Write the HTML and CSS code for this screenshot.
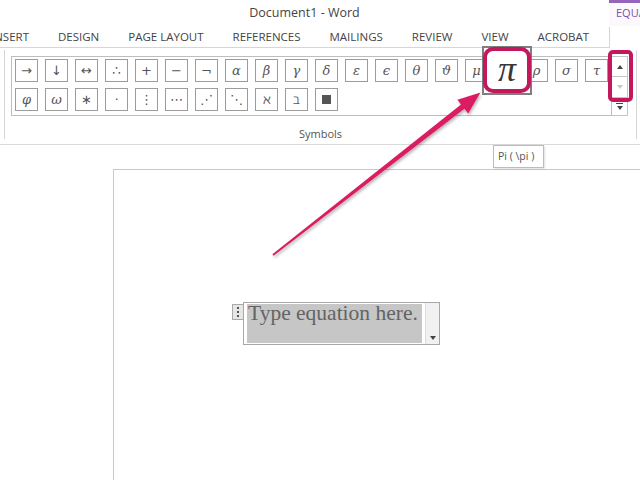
FILE: index.html
```html
<!DOCTYPE html>
<html lang="en">
<head>
<meta charset="utf-8">
<title>Document1 - Word</title>
<link rel="stylesheet" href="styles.css">
</head>
<body>
<div class="window">
  <header class="titlebar">
    <div class="title">Document1 - Word</div>
    <div class="ctx-head">EQUA</div>
  </header>
  <nav class="tabs">
    <ul class="tab-list">
      <li class="tab tab-first">INSERT</li>
      <li class="tab">DESIGN</li>
      <li class="tab">PAGE LAYOUT</li>
      <li class="tab">REFERENCES</li>
      <li class="tab">MAILINGS</li>
      <li class="tab">REVIEW</li>
      <li class="tab">VIEW</li>
      <li class="tab">ACROBAT</li>
    </ul>
    <div class="tab-active"></div>
  </nav>
  <section class="ribbon">
    <div class="group">
      <div class="gallery-row">
        <div class="gallery">
          <span class="sym">→</span>
          <span class="sym">↓</span>
          <span class="sym">↔</span>
          <span class="sym">∴</span>
          <span class="sym">+</span>
          <span class="sym">−</span>
          <span class="sym">¬</span>
          <span class="sym greek">α</span>
          <span class="sym greek">β</span>
          <span class="sym greek">γ</span>
          <span class="sym greek">δ</span>
          <span class="sym greek">ε</span>
          <span class="sym greek">ϵ</span>
          <span class="sym greek">θ</span>
          <span class="sym greek">ϑ</span>
          <span class="sym greek">μ</span>
          <span class="sym greek hovered">π</span>
          <span class="sym greek">ρ</span>
          <span class="sym greek">σ</span>
          <span class="sym greek">τ</span>
          <span class="sym greek">φ</span>
          <span class="sym greek">ω</span>
          <span class="sym">∗</span>
          <span class="sym">⋅</span>
          <span class="sym">⋮</span>
          <span class="sym">⋯</span>
          <span class="sym">⋰</span>
          <span class="sym">⋱</span>
          <span class="sym heb">ℵ</span>
          <span class="sym heb">ℶ</span>
          <span class="sym"><i class="square"></i></span>
        </div>
        <div class="scroll">
          <div class="scroll-btn scroll-up"><i class="tri-up"></i></div>
          <div class="scroll-btn scroll-down"><i class="tri-down light"></i></div>
          <div class="scroll-btn scroll-more"><i class="more-line"></i><i class="tri-down"></i></div>
        </div>
      </div>
      <div class="group-label">Symbols</div>
    </div>
  </section>
  <main class="workspace">
    <div class="page">
      <div class="eq-row">
        <div class="eq-handle"><i></i><i></i><i></i></div>
        <div class="eq-box">
          <span class="eq-text">Type equation here.</span>
          <span class="eq-drop"><i class="tri-down"></i></span>
        </div>
      </div>
    </div>
  </main>

  <div class="mark mark-pi"></div>
  <div class="mark mark-scroll"></div>
  <div class="tooltip">Pi ( \pi )</div>

  <svg class="arrow" width="640" height="480" viewBox="0 0 640 480">
    <defs>
      <filter id="sh" x="-10%" y="-10%" width="120%" height="120%">
        <feDropShadow dx="1" dy="2" stdDeviation="1.5" flood-color="#000" flood-opacity="0.3"/>
      </filter>
    </defs>
    <polygon filter="url(#sh)" fill="#dc1f62"
      points="272.4,254.2 461.0,104.4 457.4,99.8 480.5,92.5 468.2,113.4 464.4,108.8 273.6,255.8"/>
  </svg>
</div>
</body>
</html>
```
FILE: styles.css
```css
* { box-sizing: border-box; }
html, body { margin: 0; padding: 0; }
body {
  background: #ffffff;
  font-family: "Open Sans", "Noto Sans", sans-serif;
  color: #444;
}
.window {
  position: relative;
  width: 640px;
  height: 480px;
  overflow: hidden;
  background: #fff;
}

/* title bar */
.titlebar {
  display: flex;
  height: 26px;
}
.title {
  flex: 1;
  text-align: center;
  font-size: 12.5px;
  line-height: 26px;
  color: #444;
}
.ctx-head {
  width: 31px;
  border-top: 3px solid #9166bb;
  font-size: 11px;
  line-height: 20px;
  color: #7d4fa5;
  padding-left: 7px;
  overflow: hidden;
  white-space: nowrap;
  background: #fbf9fd;
}

/* tabs */
.tabs {
  display: flex;
  height: 22px;
}
.tab-list {
  flex: 1;
  display: flex;
  gap: 29px;
  margin: 0;
  padding: 0;
  list-style: none;
  border-bottom: 1px solid #d6d6d6;
  overflow: hidden;
  white-space: nowrap;
}
.tab {
  font-size: 11.5px;
  line-height: 21px;
  color: #444;
}
.tab-first { margin-left: -9px; }
.tab-active {
  width: 31px;
  border-left: 1px solid #d6d6d6;
  margin-top: 1px;
}

/* ribbon */
.ribbon {
  height: 95px;
  border-bottom: 1px solid #dadada;
}
.group {
  margin-left: 4px;
  margin-top: 2px;
  width: 633px;
  height: 89px;
  border-left: 1px solid #d6d6d6;
  border-right: 1px solid #d6d6d6;
}
.gallery-row {
  display: flex;
  padding-left: 6px;
  padding-top: 6px;
}
.gallery {
  width: 601px;
  height: 60px;
  border: 1px solid #bdbdbd;
  padding: 2px 3px 4px 3px;
  display: grid;
  grid-template-columns: repeat(20, 23px);
  grid-auto-rows: 23px;
  column-gap: 7px;
  row-gap: 6px;
}
.sym {
  display: flex;
  align-items: center;
  justify-content: center;
  border: 1px solid #9c9c9c;
  background: #fff;
  font-family: "DejaVu Sans", sans-serif;
  font-size: 13px;
  color: #555;
  line-height: 1;
}
.sym.greek {
  font-family: "DejaVu Serif", "Liberation Serif", serif;
  font-style: italic;
  font-size: 13px;
}
.sym.heb {
  font-family: "DejaVu Serif", serif;
  font-size: 13px;
}
/* hovered button grows over its neighbours */
.sym.hovered {
  position: relative;
  z-index: 2;
  margin: -13px -14px -13px -13px;
  border: 2px solid #7f7f7f;
  font-family: "Liberation Serif", serif;
  font-size: 36px;
  padding-bottom: 4px;
  color: #383838;
}
.square {
  display: block;
  width: 9px;
  height: 9px;
  background: #555;
}

.scroll {
  width: 16px;
  height: 60px;
  display: flex;
  flex-direction: column;
}
.scroll-btn {
  display: flex;
  flex-direction: column;
  align-items: center;
  justify-content: center;
  border: 1px solid #c4c4c4;
  border-left: none;
  background: #fff;
}
.scroll-up { height: 21px; }
.scroll-down { height: 21px; border-top: none; }
.scroll-more { height: 18px; border-top: none; gap: 2px; }
.tri-up {
  width: 0; height: 0;
  border-left: 3px solid transparent;
  border-right: 3px solid transparent;
  border-bottom: 4px solid #444;
}
.tri-down {
  width: 0; height: 0;
  border-left: 3px solid transparent;
  border-right: 3px solid transparent;
  border-top: 4px solid #444;
}
.tri-down.light { border-top-color: #c8c8c8; }
.more-line {
  width: 7px;
  height: 1px;
  background: #444;
}
.group-label {
  margin-top: 11px;
  text-align: center;
  font-size: 11px;
  line-height: 14px;
  color: #555;
}

/* workspace */
.workspace {
  padding-top: 24px;
  padding-left: 113px;
}
.page {
  height: 313px;
  border-top: 1px solid #c9c9c9;
  border-left: 1px solid #c9c9c9;
  background: #fff;
  padding-top: 132px;
  padding-left: 118px;
}
.eq-row {
  display: flex;
  align-items: flex-start;
}
.eq-handle {
  width: 11px;
  height: 16px;
  margin-top: 2px;
  border: 1px solid #a9a9a9;
  border-right: none;
  background: #e6e6e6;
  display: flex;
  flex-direction: column;
  align-items: center;
  justify-content: center;
  gap: 2px;
}
.eq-handle i {
  display: block;
  width: 2px;
  height: 2px;
  background: #555;
}
.eq-box {
  width: 197px;
  height: 43px;
  border: 1px solid #a8a8a8;
  background: #fff;
  display: flex;
  align-items: flex-start;
}
.eq-text {
  margin-left: 3px;
  margin-top: 1px;
  width: 175px;
  height: 39px;
  background: #c6c6c6;
  font-family: "Liberation Serif", serif;
  font-size: 21.5px;
  line-height: 19px;
  color: #636363;
  padding-left: 1px;
  white-space: nowrap;
}
.eq-drop {
  margin-left: 3px;
  width: 14px;
  height: 41px;
  background: #f1f1f1;
  border-left: 1px solid #dcdcdc;
  display: flex;
  align-items: flex-end;
  justify-content: center;
  padding-bottom: 4px;
}

/* overlays */
.mark {
  position: absolute;
  z-index: 5;
  border: 4px solid #c4185c;
}
.mark-pi {
  left: 483px;
  top: 47px;
  width: 48px;
  height: 46px;
  border-radius: 10px;
}
.mark-scroll {
  left: 608px;
  top: 50px;
  width: 25px;
  height: 52px;
  border-radius: 5px;
}
.tooltip {
  position: absolute;
  z-index: 5;
  left: 493px;
  top: 145px;
  width: 51px;
  height: 23px;
  border: 1px solid #bcbcbc;
  background: #fff;
  font-size: 10.5px;
  line-height: 21px;
  color: #555;
  padding-left: 4px;
  white-space: nowrap;
  box-shadow: 1px 1px 2px rgba(0,0,0,0.12);
}
.arrow {
  position: absolute;
  z-index: 6;
  left: 0;
  top: 0;
  pointer-events: none;
}
```
